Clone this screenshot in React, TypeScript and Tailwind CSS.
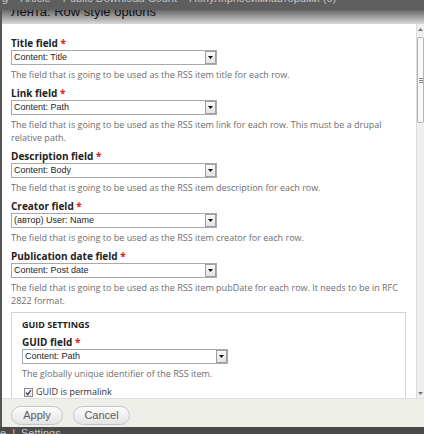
import React from "react";

const sans = { fontFamily: '"Open Sans", "DejaVu Sans", sans-serif' };
const arial = { fontFamily: '"Liberation Sans", Arial, sans-serif' };

function Select({ value }: { value: string }) {
  return (
    <div className="flex h-[15px] w-[206px] items-stretch border border-[#a9a9a9] bg-white">
      <div className="flex flex-1 items-center pl-[2px] text-[9px] leading-none text-[#1e1e1e]" style={arial}>
        {value}
      </div>
      <div className="flex w-[11px] items-center justify-center border border-[#9f9f9f] bg-linear-to-b from-[#fafafa] to-[#e4e4e4]">
        <svg width="5" height="3" viewBox="0 0 5 3">
          <path d="M0 0h5L2.5 3z" fill="#111" />
        </svg>
      </div>
    </div>
  );
}

function Label({ text, className = "" }: { text: string; className?: string }) {
  return (
    <div className={`text-[10px] font-bold leading-[14px] text-[#222] ${className}`} style={sans}>
      {text} <span className="text-[#e0201a]">*</span>
    </div>
  );
}

function Desc({ children }: { children: React.ReactNode }) {
  return (
    <div className="mt-[3px] text-[9px] leading-[13px] text-[#6e6e6e]" style={sans}>
      {children}
    </div>
  );
}

const fields = [
  { label: "Title field", value: "Content: Title", desc: "The field that is going to be used as the RSS item title for each row." },
  {
    label: "Link field",
    value: "Content: Path",
    desc: "The field that is going to be used as the RSS item link for each row. This must be a drupal relative path.",
  },
  { label: "Description field", value: "Content: Body", desc: "The field that is going to be used as the RSS item description for each row." },
  { label: "Creator field", value: "(автор) User: Name", desc: "The field that is going to be used as the RSS item creator for each row." },
  {
    label: "Publication date field",
    value: "Content: Post date",
    desc: "The field that is going to be used as the RSS item pubDate for each row. It needs to be in RFC 2822 format.",
  },
];

export default function App() {
  return (
    <div className="flex h-[434px] w-[424px] flex-col overflow-hidden bg-[#555]">
      {/* top toolbar, mostly hidden behind the dialog */}
      <div className="h-[10px] overflow-hidden bg-[#5e5e5e]">
        <div className="-mt-[7px] flex gap-[12px] whitespace-nowrap pl-[2px] text-[11px] leading-[11px] text-[#c4c4c4]" style={arial}>
          <span>g</span>
          <span>Article</span>
          <span>Public Download Count</span>
          <span>Популярноеимиавторами (6)</span>
        </div>
      </div>

      <div className="ml-[2px] flex flex-1 flex-col">
        {/* dialog title */}
        <div className="h-[14px] overflow-hidden bg-linear-to-b from-[#6a6a6a] to-[#d9d9d9]">
          <div className="-mt-[5px] pl-[9px] text-[13px] leading-[14px] text-[#111]" style={arial}>
            Лента: Row style options
          </div>
        </div>

        {/* scrolling body */}
        <div className="flex h-[374px] bg-white">
          <div className="flex-1 overflow-hidden pl-[9px] pr-[10px] pt-[12px]">
            {fields.map((f, i) => (
              <div key={f.label} className={i === 0 ? "" : "mt-[5px]"}>
                <Label text={f.label} />
                <Select value={f.value} />
                <Desc>{f.desc}</Desc>
              </div>
            ))}

            <div className="mt-[5px] border border-[#d4d4d4] px-[10px] pb-[30px] pt-[5px]">
              <div className="text-[9px] font-bold uppercase leading-[13px] text-[#222]" style={sans}>
                GUID settings
              </div>
              <Label text="GUID field" className="mt-[4px]" />
              <Select value="Content: Path" />
              <Desc>The globally unique identifier of the RSS item.</Desc>
              <div className="mt-[5px] flex items-center gap-[3px] pl-[2px] text-[9px] leading-[14px] text-[#333]" style={sans}>
                <span className="flex h-[9px] w-[9px] items-center justify-center border border-[#8a8a8a] bg-linear-to-b from-white to-[#e2e2e2]">
                  <svg width="7" height="7" viewBox="0 0 7 7">
                    <path d="M1 3.6l1.8 2L6 1" fill="none" stroke="#2c3e6a" strokeWidth="1.3" />
                  </svg>
                </span>
                <span>GUID is permalink</span>
              </div>
            </div>
          </div>

          {/* scrollbar */}
          <div className="flex w-[8px] flex-col border-l border-[#dcdcdc] bg-[#efefef]">
            <div className="flex h-[10px] items-center justify-center">
              <svg width="5" height="3" viewBox="0 0 5 3">
                <path d="M0 3h5L2.5 0z" fill="#777" />
              </svg>
            </div>
            <div className="mt-[3px] flex h-[86px] items-center justify-center rounded-[2px] border border-[#b4b4b4] bg-[#f7f7f7]">
              <div className="flex w-[4px] flex-col gap-[1px]">
                <div className="h-px bg-[#888]" />
                <div className="h-px bg-[#888]" />
                <div className="h-px bg-[#888]" />
              </div>
            </div>
            <div className="flex-1" />
            <div className="flex h-[10px] items-center justify-center">
              <svg width="5" height="3" viewBox="0 0 5 3">
                <path d="M0 0h5L2.5 3z" fill="#777" />
              </svg>
            </div>
          </div>
        </div>

        {/* button pane */}
        <div className="flex h-[29px] gap-[10px] border-t border-[#dedede] bg-[#efefea] pl-[9px] pt-[7px]">
          <button className="h-[19px] w-[52px] rounded-[10px] border border-[#c6c6c6] bg-linear-to-b from-[#fdfdfd] to-[#e3e3e3] text-[11px] text-[#5c5c5c]" style={arial}>
            Apply
          </button>
          <button className="h-[19px] w-[57px] rounded-[10px] border border-[#c6c6c6] bg-linear-to-b from-[#fdfdfd] to-[#e3e3e3] text-[11px] text-[#5c5c5c]" style={arial}>
            Cancel
          </button>
        </div>
      </div>

      {/* admin strip below the dialog */}
      <div className="h-[7px] overflow-hidden bg-[#4a4a4a]">
        <div className="flex gap-[6px] whitespace-nowrap text-[11px] leading-[12px] text-[#c8c8c8]" style={arial}>
          <span>e</span>
          <span>|</span>
          <span>Settings</span>
        </div>
      </div>
    </div>
  );
}
